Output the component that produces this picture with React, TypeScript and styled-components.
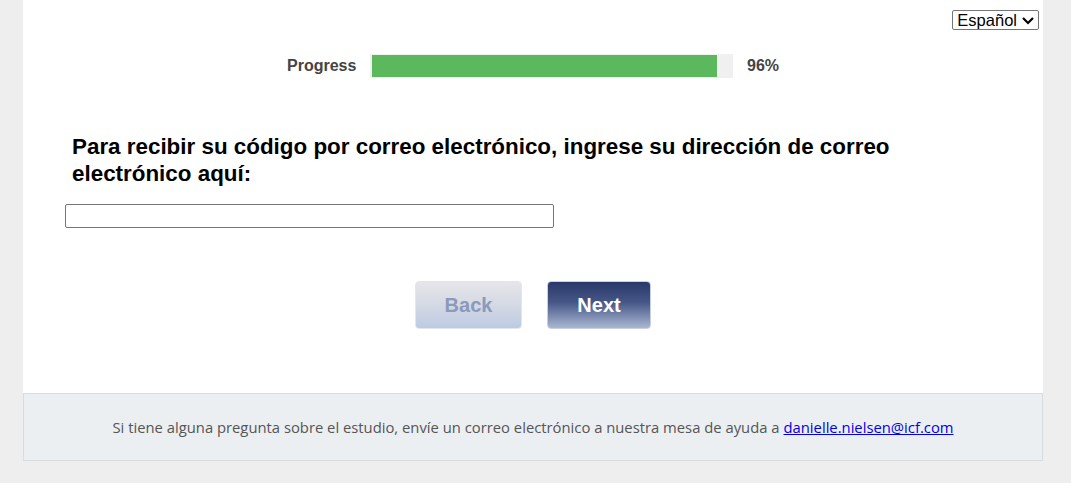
import React from "react";
import styled, { createGlobalStyle } from "styled-components";

const Global = createGlobalStyle`
  html, body { margin: 0; padding: 0; background: #eeeeee; }
  body { font-family: "Liberation Sans", Arial, sans-serif; }
`;

const Page = styled.div`
  width: 1020px;
  margin: 0 0 0 23px;
  display: flex;
  flex-direction: column;
`;

const Main = styled.main`
  background: #ffffff;
  height: 393px;
  display: flex;
  flex-direction: column;
`;

const LangBar = styled.div`
  display: flex;
  justify-content: flex-end;
  padding: 10px 4px 0 0;
  height: 19px;
`;

const LangSelect = styled.div`
  display: flex;
  align-items: center;
  gap: 4px;
  box-sizing: border-box;
  height: 20px;
  border: 1px solid #767676;
  border-radius: 2px;
  padding: 0 3px 0 4px;
  font-family: "Liberation Sans", Arial, sans-serif;
  font-size: 16.5px;
  color: #000;
`;

const ProgressRow = styled.div`
  display: flex;
  align-items: center;
  margin: 25px 0 0 264px;
  height: 24px;
`;

const ProgressLabel = styled.span`
  font-weight: bold;
  font-size: 16px;
  color: #444444;
  width: 83px;
`;

const Track = styled.div`
  width: 363px;
  height: 24px;
  box-sizing: border-box;
  padding: 1px 2px;
  background: #f0f0f0;
`;

const Fill = styled.div`
  height: 100%;
  background: #5cb85c;
`;

const ProgressValue = styled.span`
  margin-left: 14px;
  font-weight: bold;
  font-size: 16px;
  color: #444444;
`;

const Question = styled.h2`
  margin: 55px 0 0 49px;
  width: 860px;
  font-size: 22.4px;
  line-height: 27px;
  font-weight: bold;
  color: #000;
`;

const EmailInput = styled.input`
  margin: 17px 0 0 42px;
  width: 489px;
  height: 24px;
  box-sizing: border-box;
  border: 1px solid #767676;
  border-radius: 2px;
  padding: 1px 2px;
  font-size: 14px;
`;

const ButtonRow = styled.div`
  display: flex;
  justify-content: center;
  gap: 25px;
  margin: 53px 0 0 0;
`;

const NavButton = styled.button<{ $primary?: boolean }>`
  height: 48px;
  width: ${(p) => (p.$primary ? "104px" : "107px")};
  border-radius: 4px;
  border: 1px solid ${(p) => (p.$primary ? "#c9cfdc" : "#e4e6ea")};
  background: ${(p) =>
    p.$primary
      ? "linear-gradient(to bottom, #28386a 0%, #475887 45%, #aab7d3 100%)"
      : "linear-gradient(to bottom, #e6e6ea 0%, #d4d9e4 50%, #bccbe3 100%)"};
  color: ${(p) => (p.$primary ? "#ffffff" : "#8a9abb")};
  font-family: "Liberation Sans", Arial, sans-serif;
  font-weight: bold;
  font-size: 20px;
  padding: 0;
  cursor: pointer;
`;

const Footer = styled.footer`
  height: 68px;
  box-sizing: border-box;
  background: #eceff2;
  border: 1px solid #d9dcdf;
  display: flex;
  align-items: center;
  justify-content: center;
  font-family: "Open Sans", "Noto Sans", sans-serif;
  font-size: 14.8px;
  color: #555555;
`;

const Link = styled.a`
  color: #0000ee;
  text-decoration: underline;
  margin-left: 4px;
`;

export default function App() {
  const pct = 96;
  return (
    <>
      <Global />
      <Page>
        <Main>
          <LangBar>
            <LangSelect>
              Español
              <svg width="14" height="10" viewBox="0 0 14 10">
                <path d="M2 3 L7 8 L12 3" fill="none" stroke="#000" strokeWidth="2.2" />
              </svg>
            </LangSelect>
          </LangBar>
          <ProgressRow>
            <ProgressLabel>Progress</ProgressLabel>
            <Track>
              <Fill style={{ width: `${pct}%` }} />
            </Track>
            <ProgressValue>{pct}%</ProgressValue>
          </ProgressRow>
          <Question>
            Para recibir su código por correo electrónico, ingrese su dirección de correo electrónico aquí:
          </Question>
          <EmailInput type="text" />
          <ButtonRow>
            <NavButton>Back</NavButton>
            <NavButton $primary>Next</NavButton>
          </ButtonRow>
        </Main>
        <Footer>
          Si tiene alguna pregunta sobre el estudio, envíe un correo electrónico a nuestra mesa de ayuda a
          <Link href="#">danielle.nielsen@icf.com</Link>
        </Footer>
      </Page>
    </>
  );
}
